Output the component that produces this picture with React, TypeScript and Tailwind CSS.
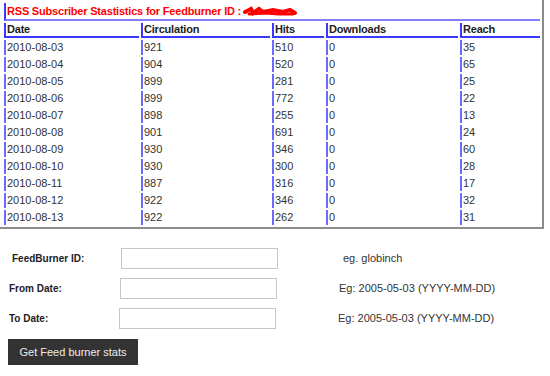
const stats = [
  { date: "2010-08-03", circulation: 921, hits: 510, downloads: 0, reach: 35 },
  { date: "2010-08-04", circulation: 904, hits: 520, downloads: 0, reach: 65 },
  { date: "2010-08-05", circulation: 899, hits: 281, downloads: 0, reach: 25 },
  { date: "2010-08-06", circulation: 899, hits: 772, downloads: 0, reach: 22 },
  { date: "2010-08-07", circulation: 898, hits: 255, downloads: 0, reach: 13 },
  { date: "2010-08-08", circulation: 901, hits: 691, downloads: 0, reach: 24 },
  { date: "2010-08-09", circulation: 930, hits: 346, downloads: 0, reach: 60 },
  { date: "2010-08-10", circulation: 930, hits: 300, downloads: 0, reach: 28 },
  { date: "2010-08-11", circulation: 887, hits: 316, downloads: 0, reach: 17 },
  { date: "2010-08-12", circulation: 922, hits: 346, downloads: 0, reach: 32 },
  { date: "2010-08-13", circulation: 922, hits: 262, downloads: 0, reach: 31 },
];

const fields = [
  { label: "FeedBurner ID:", hint: "eg. globinch", labelCls: "pl-[12px] w-[121px]", hintCls: "ml-[65px]" },
  { label: "From Date:", hint: "Eg: 2005-05-03 (YYYY-MM-DD)", labelCls: "pl-[9px] w-[120px]", hintCls: "ml-[62px]" },
  { label: "To Date:", hint: "Eg: 2005-05-03 (YYYY-MM-DD)", labelCls: "pl-[9px] w-[119px]", hintCls: "ml-[62px]" },
];

const th = "h-[15px] border-l-2 border-b-2 border-[#3a3aff] p-0 pl-px text-left align-middle text-[11px] font-bold leading-[13px] tracking-[-0.2px] text-[#222]";
const td = "h-[15px] border-l-2 border-[#6a6aff] p-0 pl-px text-left align-middle text-[11px] leading-[13px] text-[#333]";

export default function App() {
  return (
    <div className="h-[376px] w-[550px] bg-white font-['Liberation_Sans',Arial,sans-serif]">
      <div className="w-[544px] border-r-2 border-b-2 border-[#8c8c8c] pt-px">
        <table className="ml-[2px] w-[540px] table-fixed border-separate border-spacing-0.5">
          <colgroup>
            <col className="w-[135px]" />
            <col className="w-[129px]" />
            <col className="w-[52px]" />
            <col className="w-[132px]" />
            <col />
          </colgroup>
          <thead>
            <tr>
              <th colSpan={5} className="h-[18px] border-l-2 border-b-2 border-l-[#3a3aff] border-b-[#8080ff] p-0 pl-px text-left align-middle text-[11px] font-bold leading-[13px] tracking-[-0.2px] text-[#ff0000]">
                <span className="inline-flex items-center">
                  RSS Subscriber Stastistics for Feedburner ID :
                  {/* scribbled-out feed id */}
                  <svg width="56" height="12" viewBox="0 0 56 12" className="ml-[2px]">
                    <path d="M2 7 L8 4 L10 8 L16 4 L20 7 L30 5 L40 7 L47 5 L52 8" stroke="#ff0000" strokeWidth="4" fill="none" strokeLinecap="round" />
                    <path d="M6 9 L22 8 L36 9 L50 9" stroke="#ff0000" strokeWidth="3" fill="none" strokeLinecap="round" />
                  </svg>
                </span>
              </th>
            </tr>
            <tr>
              <th className={th}>Date</th>
              <th className={th}>Circulation</th>
              <th className={th}>Hits</th>
              <th className={th}>Downloads</th>
              <th className={th}>Reach</th>
            </tr>
          </thead>
          <tbody>
            {stats.map((row) => (
              <tr key={row.date}>
                <td className={td}>{row.date}</td>
                <td className={td}>{row.circulation}</td>
                <td className={td}>{row.hits}</td>
                <td className={td}>{row.downloads}</td>
                <td className={td}>{row.reach}</td>
              </tr>
            ))}
          </tbody>
        </table>
      </div>

      <form className="mt-[19px] flex flex-col gap-[9px]">
        {fields.map((f) => (
          <div key={f.label} className="flex h-[21px] items-center">
            <label className={`${f.labelCls} text-[10px] font-bold text-[#222]`}>{f.label}</label>
            <input type="text" className="h-[21px] w-[157px] border border-[#c6c6c6] bg-white outline-none" />
            <span className={`${f.hintCls} text-[11px] text-[#333]`}>{f.hint}</span>
          </div>
        ))}
        <button type="button" className="ml-[8px] mt-px h-[26px] w-[130px] bg-[#333] text-[11px] text-[#eee]">
          Get Feed burner stats
        </button>
      </form>
    </div>
  );
}
